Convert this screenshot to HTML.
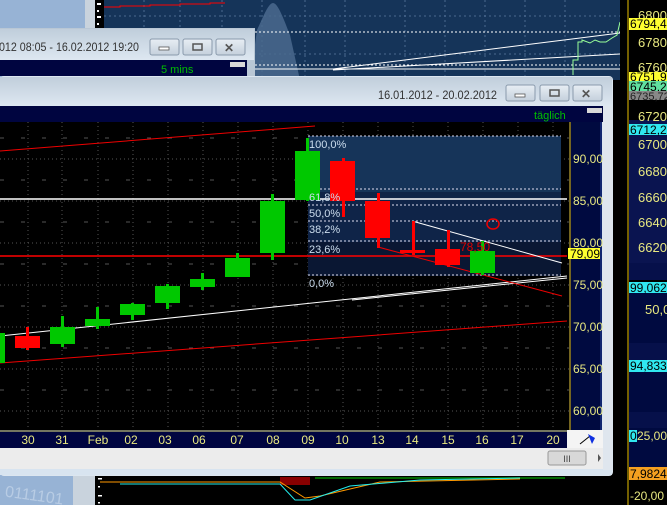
<!DOCTYPE html>
<html><head><meta charset="utf-8"><style>
html,body{margin:0;padding:0;width:667px;height:505px;overflow:hidden;background:#000}
svg{display:block}
text{font-family:"Liberation Sans",sans-serif}
</style></head><body>
<svg width="667" height="505" viewBox="0 0 667 505" xmlns="http://www.w3.org/2000/svg">
<defs>
<linearGradient id="tb" x1="0" y1="0" x2="0" y2="1"><stop offset="0" stop-color="#c0cedb"/><stop offset="1" stop-color="#dde7f1"/></linearGradient>
<linearGradient id="btn" x1="0" y1="0" x2="0" y2="1"><stop offset="0" stop-color="#e8eef4"/><stop offset="1" stop-color="#c4d0dc"/></linearGradient>
</defs>
<rect x="0" y="0" width="85" height="505" fill="#97b3d5"/>
<rect x="85" y="0" width="10" height="505" fill="#c9d3dd"/>
<rect x="95" y="0" width="9" height="80" fill="#000"/>
<g fill="#fff"><rect x="97" y="3" width="4" height="2"/><rect x="97" y="10" width="2" height="2"/><rect x="97" y="16" width="4" height="2"/><rect x="97" y="23" width="2" height="2"/></g>
<rect x="104" y="0" width="516" height="80" fill="#153459"/>
<g stroke="#4a6a90" stroke-dasharray="2,3" stroke-width="1">
<line x1="144" y1="0" x2="144" y2="80"/><line x1="180" y1="0" x2="180" y2="80"/><line x1="222" y1="0" x2="222" y2="80"/><line x1="262" y1="0" x2="262" y2="80"/><line x1="305" y1="0" x2="305" y2="80"/><line x1="345" y1="0" x2="345" y2="80"/><line x1="405" y1="0" x2="405" y2="80"/><line x1="445" y1="0" x2="445" y2="80"/><line x1="485" y1="0" x2="485" y2="80"/><line x1="525" y1="0" x2="525" y2="80"/><line x1="565" y1="0" x2="565" y2="80"/>
<line x1="104" y1="16" x2="620" y2="16"/><line x1="104" y1="54" x2="620" y2="54"/>
</g>
<path d="M257 30 C262 20,268 3,273 3 C278 3,284 20,290 35 L300 80 L250 80 Z" fill="#4a6a8e" opacity="0.85"/>
<path d="M104 7 H120 V6 H150 V5 H180 V4 H210 V3 H225" stroke="#f00" stroke-width="1" fill="none"/>
<g stroke="#fff" stroke-width="1">
<line x1="255" y1="32" x2="620" y2="32" stroke-dasharray="2,2"/>
<line x1="255" y1="65" x2="620" y2="65" stroke-dasharray="2,2"/>
<line x1="255" y1="69" x2="620" y2="69"/>
<line x1="333" y1="69" x2="620" y2="33"/>
<line x1="333" y1="70" x2="620" y2="54"/>
</g>
<path d="M573 75 V60 L578 60 V42 L582 42 V40 L590 43 L595 40 L600 42 L606 42 L612 38 L617 35 L620 22" stroke="#9f9" fill="none" stroke-width="1"/>
<rect x="620" y="0" width="47" height="505" fill="#000"/>
<line x1="628" y1="0" x2="628" y2="505" stroke="#e8c000"/>
<rect x="629" y="120" width="38" height="143" fill="#0a1450"/>
<rect x="629" y="282" width="38" height="61" fill="#000a40"/>
<rect x="629" y="360" width="38" height="52" fill="#000a40"/>
<rect x="629" y="428" width="38" height="40" fill="#000a40"/>
<rect x="629" y="263" width="38" height="17" fill="#06104a"/>
<rect x="629" y="343" width="38" height="17" fill="#06104a"/>
<rect x="629" y="412" width="38" height="16" fill="#06104a"/>
<g font-size="13" fill="#e8e880">
<text x="638" y="20">6800</text><text x="638" y="47">6780,0</text><text x="638" y="72">6760</text>
<text x="638" y="121">6720</text><text x="638" y="149">6700,0</text><text x="638" y="176">6680,0</text><text x="638" y="202">6660,0</text><text x="638" y="227">6640,0</text><text x="638" y="252">6620,0</text>
<text x="645" y="314">50,00</text>
</g>
<rect x="629" y="18" width="38" height="12" fill="#ffff30"/><text x="630" y="28" font-size="12" fill="#000">6794,47</text>
<rect x="629" y="72" width="38" height="9" fill="#ffff30"/><text x="630" y="81" font-size="12" fill="#000">6751,98</text>
<rect x="629" y="81" width="38" height="10" fill="#60e0a0"/><text x="630" y="91" font-size="12" fill="#000">6745,21</text>
<rect x="629" y="91" width="38" height="9" fill="#888"/><text x="630" y="100" font-size="11" fill="#222">6735,72</text>
<rect x="629" y="124" width="38" height="11" fill="#30e8f0"/><text x="630" y="134" font-size="12" fill="#000">6712,20</text>
<rect x="629" y="282" width="38" height="11" fill="#30e8f0"/><text x="630" y="292" font-size="12" fill="#000">99,0622</text>
<rect x="629" y="360" width="38" height="12" fill="#30e8f0"/><text x="630" y="370" font-size="12" fill="#000">94,8333</text>
<rect x="629" y="430" width="8" height="12" fill="#30e8f0"/><text x="630" y="440" font-size="12" fill="#000">0</text><text x="637" y="440" font-size="12" fill="#e8e880">25,00</text>
<rect x="629" y="467" width="38" height="13" fill="#f5a020"/><text x="630" y="478" font-size="12" fill="#000">7,9824</text>
<text x="630" y="500" font-size="12" fill="#e8e880">-20,00</text>
<!-- rear window -->
<rect x="0" y="28" width="255" height="48" fill="#b9c7d5"/>
<rect x="0" y="29" width="254" height="31" fill="url(#tb)"/>
<text x="-1" y="51" font-size="12" fill="#333" textLength="140" lengthAdjust="spacingAndGlyphs">012 08:05 - 16.02.2012 19:20</text>
<g stroke="#8a9aac" fill="url(#btn)"><rect x="150" y="39" width="29" height="16" rx="2"/><rect x="183" y="39" width="29" height="16" rx="2"/><rect x="216" y="39" width="29" height="16" rx="2"/></g>
<rect x="159" y="47" width="10" height="3" fill="#fff" stroke="#555" stroke-width="0.8"/>
<rect x="193" y="44" width="9" height="6" fill="none" stroke="#555" stroke-width="1.5"/>
<text x="224" y="52" font-size="12" font-weight="bold" fill="#555">✕</text>
<rect x="0" y="60" width="247" height="16" fill="#000540"/>
<text x="161" y="73" font-size="11" fill="#00c000">5 mins</text>
<rect x="230" y="62" width="15" height="5" fill="#d8d8d8"/>
<!-- front window -->
<rect x="0" y="76" width="613" height="400" fill="#dce6f0" rx="4"/>
<rect x="0" y="77" width="612" height="29" fill="url(#tb)"/>
<text x="378" y="99" font-size="12" fill="#333" textLength="119" lengthAdjust="spacingAndGlyphs">16.01.2012 - 20.02.2012</text>
<g stroke="#8a9aac" fill="url(#btn)"><rect x="506" y="85" width="29" height="16" rx="2"/><rect x="540" y="85" width="29" height="16" rx="2"/><rect x="573" y="85" width="29" height="16" rx="2"/></g>
<rect x="515" y="94" width="10" height="3" fill="#fff" stroke="#555" stroke-width="0.8"/>
<rect x="550" y="90" width="9" height="6" fill="none" stroke="#555" stroke-width="1.5"/>
<text x="581" y="98" font-size="12" font-weight="bold" fill="#555">✕</text>
<rect x="0" y="106" width="603" height="16" fill="#000540"/>
<text x="534" y="119" font-size="11" fill="#00c000">täglich</text>
<rect x="587" y="108" width="15" height="5" fill="#d8d8d8"/>
<rect x="0" y="122" width="569" height="308" fill="#000"/>
<g stroke="#555" stroke-dasharray="1,3">
<line x1="28" y1="122" x2="28" y2="430"/><line x1="62" y1="122" x2="62" y2="430"/><line x1="98" y1="122" x2="98" y2="430"/><line x1="133" y1="122" x2="133" y2="430"/><line x1="168" y1="122" x2="168" y2="430"/><line x1="203" y1="122" x2="203" y2="430"/><line x1="238" y1="122" x2="238" y2="430"/><line x1="273" y1="122" x2="273" y2="430"/><line x1="308" y1="122" x2="308" y2="430"/><line x1="343" y1="122" x2="343" y2="430"/><line x1="378" y1="122" x2="378" y2="430"/><line x1="413" y1="122" x2="413" y2="430"/><line x1="448" y1="122" x2="448" y2="430"/><line x1="483" y1="122" x2="483" y2="430"/><line x1="518" y1="122" x2="518" y2="430"/><line x1="553" y1="122" x2="553" y2="430"/>
<line x1="0" y1="159" x2="569" y2="159"/><line x1="0" y1="201" x2="569" y2="201"/><line x1="0" y1="243" x2="569" y2="243"/><line x1="0" y1="285" x2="569" y2="285"/><line x1="0" y1="327" x2="569" y2="327"/><line x1="0" y1="369" x2="569" y2="369"/><line x1="0" y1="411" x2="569" y2="411"/>
</g>
<g stroke="#555" stroke-dasharray="4,17"><line x1="0" y1="138" x2="569" y2="138"/><line x1="0" y1="180" x2="569" y2="180"/><line x1="0" y1="222" x2="569" y2="222"/><line x1="0" y1="264" x2="569" y2="264"/><line x1="0" y1="306" x2="569" y2="306"/><line x1="0" y1="348" x2="569" y2="348"/><line x1="0" y1="390" x2="569" y2="390"/></g>
<rect x="308" y="136" width="253" height="56" fill="#163459"/>
<rect x="308" y="192" width="253" height="50" fill="#0f2448"/>
<rect x="308" y="242" width="253" height="34" fill="#0a1733"/>
<g stroke="#dde" stroke-dasharray="2,2"><line x1="308" y1="136" x2="561" y2="136"/><line x1="308" y1="189" x2="561" y2="189"/><line x1="308" y1="205" x2="561" y2="205"/><line x1="308" y1="221" x2="561" y2="221"/><line x1="308" y1="241" x2="561" y2="241"/><line x1="308" y1="275" x2="561" y2="275"/></g>
<polyline points="0,151 315,126" stroke="#e00" fill="none"/>
<polyline points="0,363 567,321" stroke="#e00" fill="none"/>
<line x1="0" y1="199" x2="567" y2="199" stroke="#fff" stroke-width="1.5"/>
<line x1="0" y1="256" x2="567" y2="256" stroke="#f00" stroke-width="1.5"/>
<polyline points="0,336 567,276" stroke="#fff" fill="none"/>
<polyline points="352,300 567,278" stroke="#fff" fill="none"/>
<polyline points="412,221 562,263" stroke="#fff" fill="none"/>
<polyline points="378,247 562,296" stroke="#e00" fill="none"/>
<g fill="#00c800">
<rect x="0" y="333" width="5" height="30"/>
<rect x="61" y="316" width="3" height="31"/><rect x="50" y="327" width="25" height="17"/>
<rect x="96" y="307" width="3" height="22"/><rect x="85" y="319" width="25" height="7"/>
<rect x="131" y="303" width="3" height="17"/><rect x="120" y="304" width="25" height="11"/>
<rect x="166" y="284" width="3" height="25"/><rect x="155" y="286" width="25" height="17"/>
<rect x="201" y="273" width="3" height="17"/><rect x="190" y="279" width="25" height="8"/>
<rect x="236" y="253" width="3" height="24"/><rect x="225" y="258" width="25" height="19"/>
<rect x="271" y="194" width="3" height="66"/><rect x="260" y="201" width="25" height="52"/>
<rect x="306" y="138" width="3" height="63"/><rect x="295" y="151" width="25" height="49"/>
<rect x="481" y="241" width="3" height="34"/><rect x="470" y="251" width="25" height="22"/>
</g>
<g fill="#f00">
<rect x="26" y="327" width="3" height="23"/><rect x="15" y="336" width="25" height="12"/>
<rect x="342" y="158" width="3" height="59"/><rect x="330" y="161" width="25" height="40"/>
<rect x="377" y="193" width="3" height="55"/><rect x="365" y="201" width="25" height="37"/>
<rect x="412" y="221" width="3" height="34"/><rect x="400" y="250" width="25" height="3"/>
<rect x="447" y="230" width="3" height="37"/><rect x="435" y="249" width="25" height="16"/>
</g>
<g font-size="11" fill="#cde">
<text x="309" y="148">100,0%</text><text x="309" y="201">61,8%</text><text x="309" y="217">50,0%</text><text x="309" y="233">38,2%</text><text x="309" y="253">23,6%</text><text x="309" y="287">0,0%</text>
</g>
<text x="460" y="251" font-size="12" fill="#d00">78,50</text>
<ellipse cx="493" cy="224" rx="6" ry="5" fill="none" stroke="#e00" stroke-width="1.5"/>
<rect x="569" y="122" width="33" height="308" fill="#000a40"/>
<line x1="570" y1="122" x2="570" y2="430" stroke="#e8c000"/>
<line x1="601" y1="122" x2="601" y2="430" stroke="#2040a0"/>
<g font-size="12" fill="#e8e880">
<text x="573" y="163">90,00</text><text x="573" y="205">85,00</text><text x="573" y="247">80,00</text><text x="573" y="289">75,00</text><text x="573" y="331">70,00</text><text x="573" y="373">65,00</text><text x="573" y="415">60,00</text>
</g>
<rect x="568" y="248" width="32" height="11" fill="#ffff30"/><text x="570" y="258" font-size="12" fill="#000">79,09</text>
<rect x="0" y="430" width="567" height="18" fill="#000540"/>
<line x1="0" y1="431" x2="567" y2="431" stroke="#e8e880"/>
<g font-size="12" fill="#e8e880" text-anchor="middle">
<text x="28" y="444">30</text><text x="62" y="444">31</text><text x="98" y="444">Feb</text><text x="131" y="444">02</text><text x="165" y="444">03</text><text x="199" y="444">06</text><text x="237" y="444">07</text><text x="273" y="444">08</text><text x="308" y="444">09</text><text x="342" y="444">10</text><text x="378" y="444">13</text><text x="412" y="444">14</text><text x="448" y="444">15</text><text x="482" y="444">16</text><text x="517" y="444">17</text><text x="553" y="444">20</text>
</g>
<rect x="567" y="430" width="36" height="18" fill="#f4f4f4"/>
<path d="M580 444 L590 436" stroke="#000" stroke-width="1"/><path d="M588 434 L595 438 L592 444 Z" fill="#1030e0"/>
<rect x="0" y="448" width="603" height="21" fill="#ececec"/>
<rect x="548" y="451" width="38" height="14" rx="2" fill="#d8d8d8" stroke="#999"/>
<text x="567" y="462" font-size="9" fill="#444" text-anchor="middle">III</text>
<path d="M598 454 L601 458 L598 462 Z" fill="#555"/>
<rect x="0" y="469" width="612" height="6" fill="#d8e4f0"/>
<rect x="603" y="106" width="9" height="364" fill="#dfe6ee"/>
<rect x="0" y="476" width="73" height="29" fill="#97b3d5"/>
<text x="5" y="500" font-size="16" fill="#b8cce4" transform="rotate(8 30 495)">0111101</text>
<rect x="73" y="476" width="22" height="29" fill="#c9d3dd"/>
<rect x="95" y="476" width="525" height="29" fill="#000"/>
<g fill="#fff"><rect x="98" y="478" width="4" height="1.5"/><rect x="98" y="486" width="2" height="1.5"/><rect x="98" y="495" width="4" height="1.5"/><rect x="98" y="502" width="2" height="1.5"/></g>
<rect x="280" y="477" width="30" height="8" fill="#800"/>
<rect x="315" y="477" width="250" height="2" fill="#060"/>
<polyline points="100,482 280,482 305,498 320,496 380,482 520,479" stroke="#f90" fill="none"/>
<polyline points="120,484 280,484 295,500 310,500 350,486 420,480 520,478" stroke="#2ee" fill="none"/>
</svg>
</body></html>
